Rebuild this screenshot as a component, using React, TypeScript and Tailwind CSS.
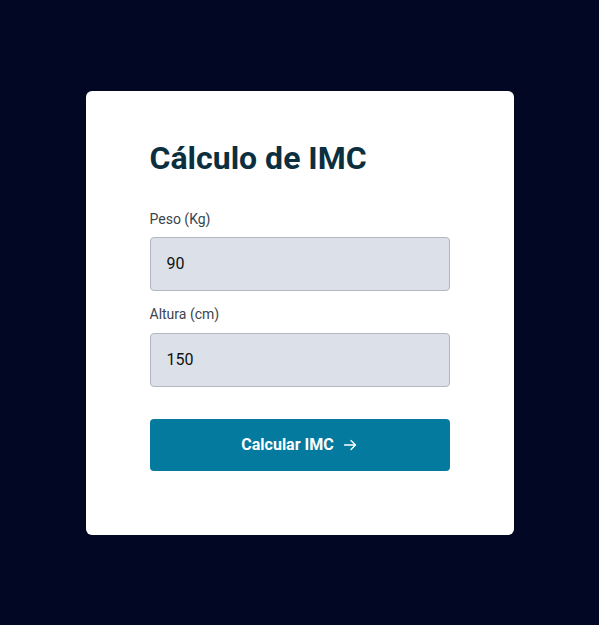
import React from "react";

export default function App() {
  return (
    <div
      className="min-h-[625px] w-full bg-[#020824] flex items-start justify-center pt-[91px]"
      style={{ fontFamily: "Roboto, 'Liberation Sans', sans-serif" }}
    >
      <div className="w-[428px] bg-white rounded-md px-16 pt-[47px] pb-16">
        <h1 className="text-[32px] leading-10 font-bold text-[#0b2f3e]">Cálculo de IMC</h1>
        <div className="mt-[31px] flex flex-col">
          <label className="text-sm text-[#3a4550] leading-5">Peso (Kg)</label>
          <div className="mt-[8px] h-[54px] rounded bg-[#dce1e9] border border-[#b3b8c0] flex items-center px-4 text-base text-[#111]">
            90
          </div>
          <label className="mt-[13px] text-sm text-[#3a4550] leading-5">Altura (cm)</label>
          <div className="mt-[9px] h-[54px] rounded bg-[#dce1e9] border border-[#b3b8c0] flex items-center px-4 text-base text-[#111]">
            150
          </div>
          <button className="mt-[32px] h-[52px] rounded bg-[#047a9e] text-white font-bold text-base flex items-center justify-center gap-2">
            Calcular IMC
            <svg width="16" height="16" viewBox="0 0 16 16" fill="none" stroke="white" strokeWidth="1.3" strokeLinecap="round" strokeLinejoin="round">
              <path d="M2.5 8h11M9 3.5 13.5 8 9 12.5" />
            </svg>
          </button>
        </div>
      </div>
    </div>
  );
}
